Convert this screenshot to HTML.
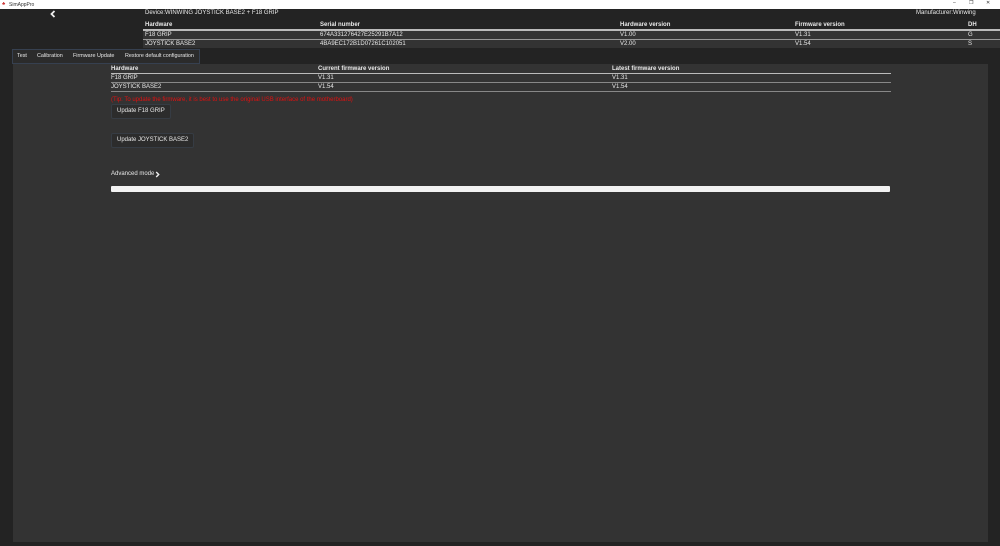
<!DOCTYPE html><html><head><style>
body{margin:0;width:1000px;height:546px;background:#232323;font-family:"Liberation Sans",sans-serif;font-size:6px;color:#e8e8e8;position:relative;overflow:hidden;white-space:nowrap}
.a{position:absolute}
.tb{left:0;top:0;width:1000px;height:9px;background:#fff;color:#333;font-size:5px}
.hr{height:1px;background:#bbb}
.row{display:flex;height:8px;line-height:8px}
.btn{position:absolute;background:#2c2c2c;border:1px solid #363c44;border-radius:2px;font-size:6px;line-height:13px;padding:0 5px}
</style></head><body>
<div class="a tb"><span class="a" style="left:2px;top:1px;color:#c33;font-weight:bold">♣</span><span class="a" style="left:9px;top:1.5px">SimAppPro</span><span class="a" style="left:953px;top:0">–</span><span class="a" style="left:969px;top:0">❐</span><span class="a" style="left:986px;top:0">✕</span></div>
<svg class="a" style="left:50px;top:10px" width="6" height="8"><path d="M4.5 1 L1.5 4 L4.5 7" stroke="#eee" stroke-width="1.8" fill="none"/></svg>
<div class="a" style="left:145px;top:10px">Device:WINWING JOYSTICK BASE2 + F18 GRIP</div>
<div class="a" style="left:916px;top:10px">Manufacturer:Winwing</div>
<div class="a" style="left:143px;top:21px;width:857px">
<div class="row" style="font-weight:bold;position:relative"><span class="a" style="left:2px">Hardware</span><span class="a" style="left:177px">Serial number</span><span class="a" style="left:477px">Hardware version</span><span class="a" style="left:652px">Firmware version</span><span class="a" style="left:825px">DH</span></div>
<div class="hr" style="height:1.5px"></div>
<div class="row" style="background:#333;position:relative"><span class="a" style="left:2px">F18 GRIP</span><span class="a" style="left:177px">674A331276427E25291B7A12</span><span class="a" style="left:477px">V1.00</span><span class="a" style="left:652px">V1.31</span><span class="a" style="left:825px">G</span></div>
<div class="hr" style="height:1.5px;background:#999"></div>
<div class="row" style="background:#333;position:relative"><span class="a" style="left:2px">JOYSTICK BASE2</span><span class="a" style="left:177px">4BA9EC172B1D07261C102051</span><span class="a" style="left:477px">V2.00</span><span class="a" style="left:652px">V1.54</span><span class="a" style="left:825px">S</span></div>
</div>
<div class="a" style="left:12px;top:49px;width:186px;height:13px;background:#2b2b2b;border:1px solid #364050;line-height:13px;font-size:5.4px"><span class="a" style="left:4px">Test</span><span class="a" style="left:24px">Calibration</span><span class="a" style="left:60px">Firmware Update</span><span class="a" style="left:112px">Restore default configuration</span></div>
<div class="a" style="left:13px;top:64px;width:975px;height:478px;background:#333"></div>
<div class="a" style="left:111px;top:65px;width:780px">
<div class="row" style="font-weight:bold;position:relative"><span class="a" style="left:0">Hardware</span><span class="a" style="left:207px">Current firmware version</span><span class="a" style="left:501px">Latest firmware version</span></div>
<div class="hr"></div>
<div class="row" style="position:relative"><span class="a" style="left:0">F18 GRIP</span><span class="a" style="left:207px">V1.31</span><span class="a" style="left:501px">V1.31</span></div>
<div class="hr" style="background:#888"></div>
<div class="row" style="position:relative"><span class="a" style="left:0">JOYSTICK BASE2</span><span class="a" style="left:207px">V1.54</span><span class="a" style="left:501px">V1.54</span></div>
<div class="hr" style="background:#888"></div>
</div>
<div class="a" style="left:111px;top:97px;color:#e01010">(Tip: To update the firmware, it is best to use the original USB interface of the motherboard)</div>
<div class="btn" style="left:111px;top:104px">Update F18 GRIP</div>
<div class="btn" style="left:111px;top:133px">Update JOYSTICK BASE2</div>
<div class="a" style="left:111px;top:171px">Advanced mode</div>
<svg class="a" style="left:155px;top:171px" width="5" height="7"><path d="M1.2 1 L3.7 3.5 L1.2 6" stroke="#eee" stroke-width="1.4" fill="none"/></svg>
<div class="a" style="left:111px;top:186px;width:779px;height:6px;background:#f2f2f2;border-radius:1px"></div>
</body></html>
